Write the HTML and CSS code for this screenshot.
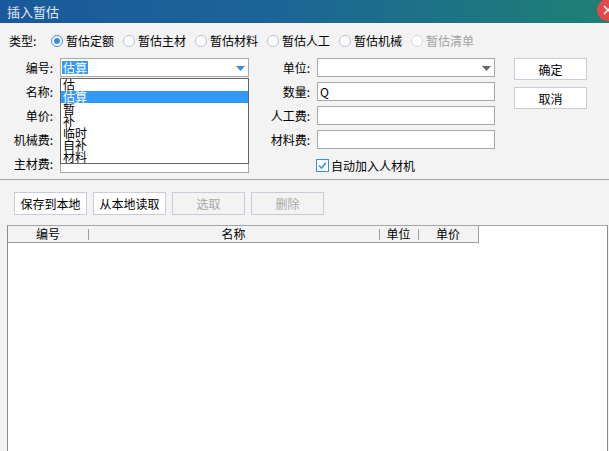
FILE: index.html
```html
<!DOCTYPE html>
<html>
<head>
<meta charset="utf-8">
<title>插入暂估</title>
<link rel="stylesheet" href="styles.css">
</head>
<body>
<div class="window">
  <div class="titlebar">
    <span class="title">插入暂估</span>
    <span class="close">
      <svg width="22" height="22" viewBox="0 0 22 22"><circle cx="11" cy="11" r="11" fill="#e34a4c"/><path d="M7 7 L15 15 M15 7 L7 15" stroke="#fff" stroke-width="1.4"/></svg>
    </span>
  </div>

  <div class="types">
    <span class="types-label">类型:</span>
    <span class="radio checked"><span class="radio-circle"></span>暂估定额</span>
    <span class="radio"><span class="radio-circle"></span>暂估主材</span>
    <span class="radio"><span class="radio-circle"></span>暂估材料</span>
    <span class="radio"><span class="radio-circle"></span>暂估人工</span>
    <span class="radio"><span class="radio-circle"></span>暂估机械</span>
    <span class="radio disabled"><span class="radio-circle"></span>暂估清单</span>
  </div>

  <div class="form">
    <span class="lbl c1">编号:</span>
    <div class="field combo combo-code c2">
      <span class="sel">估算</span>
      <svg class="arrow" width="9" height="5" viewBox="0 0 9 5"><polygon points="0,0 9,0 4.5,5" fill="#3b8de0"/></svg>
      <ul class="droplist">
        <li>估</li>
        <li class="active">估算</li>
        <li>暂</li>
        <li>补</li>
        <li>临时</li>
        <li>自补</li>
        <li>材料</li>
      </ul>
    </div>
    <span class="lbl c3">单位:</span>
    <div class="field combo c4">
      <svg class="arrow" width="9" height="5" viewBox="0 0 9 5"><polygon points="0,0 9,0 4.5,5" fill="#666"/></svg>
    </div>
    <div class="actions">
      <span class="btn">确定</span>
      <span class="btn">取消</span>
    </div>

    <span class="lbl c1">名称:</span>
    <div class="field c2"></div>
    <span class="lbl c3">数量:</span>
    <div class="field c4">Q</div>

    <span class="lbl c1">单价:</span>
    <div class="field c2"></div>
    <span class="lbl c3">人工费:</span>
    <div class="field c4"></div>

    <span class="lbl c1">机械费:</span>
    <div class="field c2"></div>
    <span class="lbl c3">材料费:</span>
    <div class="field c4"></div>

    <span class="lbl c1">主材费:</span>
    <div class="field c2"></div>
    <label class="check c4">
      <svg class="checkbox" width="13" height="13" viewBox="0 0 13 13"><rect x="0.5" y="0.5" width="12" height="12" fill="#fff" stroke="#3b8de0"/><path d="M3 6.5 L5.5 9 L10 3.8" fill="none" stroke="#3b8de0" stroke-width="1.6"/></svg>
      <span>自动加入人材机</span>
    </label>
  </div>

  <div class="sep"></div>

  <div class="toolbar">
    <span class="btn">保存到本地</span>
    <span class="btn">从本地读取</span>
    <span class="btn disabled">选取</span>
    <span class="btn disabled">删除</span>
  </div>

  <div class="table">
    <div class="thead">
      <span class="th col-code">编号</span>
      <span class="th col-name">名称</span>
      <span class="th col-unit">单位</span>
      <span class="th col-price">单价</span>
    </div>
  </div>
</div>
</body>
</html>
```

FILE: styles.css
```css
* { box-sizing: border-box; }
html, body { margin: 0; padding: 0; }
body {
  width: 609px;
  height: 451px;
  overflow: hidden;
  background: #f3f3f3;
  font-family: "Noto Sans CJK SC", "Noto Sans", sans-serif;
  font-size: 12px;
  color: #000;
}
.window {
  display: flex;
  flex-direction: column;
  height: 451px;
}

/* title bar */
.titlebar {
  flex: none;
  height: 23px;
  position: relative;
  padding-left: 7px;
  background: linear-gradient(to right, #1a599c 0%, #1b6597 45%, #1f8074 100%);
  color: #e4ecf5;
  font-size: 13px;
  line-height: 23px;
}
.close {
  position: absolute;
  right: -10px;
  top: -1px;
  width: 22px;
  height: 22px;
}
.close svg { display: block; }

/* radio row */
.types {
  display: flex;
  align-items: center;
  height: 16px;
  margin-top: 10px;
  padding-left: 9px;
  line-height: 16px;
}
.types-label { width: 32px; margin-right: 10px; }
.radio {
  display: flex;
  align-items: center;
  margin-right: 9px;
  white-space: nowrap;
}
.radio-circle {
  width: 12px;
  height: 12px;
  margin-right: 3px;
  border-radius: 50%;
  border: 1px solid #bcc3cf;
  background: #fff;
  display: flex;
  align-items: center;
  justify-content: center;
}
.radio.checked .radio-circle { border-color: #3b8de0; }
.radio.checked .radio-circle::after {
  content: "";
  width: 6px;
  height: 6px;
  border-radius: 50%;
  background: #3b8de0;
}
.radio.disabled { color: #a2a2a2; }
.radio.disabled .radio-circle { border-color: #d6dae0; }

/* form grid */
.form {
  display: grid;
  grid-template-columns: 56px 189px 60px 178px 92px;
  grid-auto-rows: 19px;
  column-gap: 4px;
  row-gap: 5px;
  margin-top: 9px;
  flex: none;
}
.c1 { grid-column: 1; }
.c2 { grid-column: 2; }
.c3 { grid-column: 3; }
.c4 { grid-column: 4; }
.lbl {
  text-align: right;
  padding-right: 3px;
  line-height: 19px;
  white-space: nowrap;
}
.field {
  position: relative;
  height: 19px;
  background: #fff;
  border: 1px solid #a9a99f;
  padding-left: 2px;
  line-height: 17px;
}
.combo .arrow {
  position: absolute;
  right: 3px;
  top: 7px;
}
.combo-code { z-index: 5; padding-left: 1px; }
.sel {
  display: inline-block;
  margin-top: 2px;
  padding: 0 1px;
  background: #3399ff;
  color: #fff;
  line-height: 13px;
  vertical-align: top;
}
.droplist {
  position: absolute;
  z-index: 10;
  left: -1px;
  top: 19px;
  width: 189px;
  margin: 0;
  padding: 0;
  list-style: none;
  background: #fff;
  border: 1px solid #646464;
}
.droplist li {
  height: 12px;
  line-height: 12px;
  padding-left: 2px;
  overflow: visible;
  white-space: nowrap;
}
.droplist li.active { background: #3399ff; color: #fff; }

.actions {
  grid-column: 5;
  grid-row: 1 / span 3;
  display: flex;
  flex-direction: column;
  align-items: flex-start;
  gap: 7px;
  padding-left: 15px;
}
.btn {
  display: flex;
  align-items: center;
  justify-content: center;
  width: 73px;
  height: 22px;
  background: #fff;
  border: 1px solid #c8ccd6;
  white-space: nowrap;
}
.btn.disabled { background: #f3f3f3; color: #a8a8a8; }

.check {
  display: flex;
  align-items: center;
  gap: 2px;
  margin-left: -1px;
  padding-top: 4px;
  white-space: nowrap;
}
.checkbox { display: block; flex: none; }

/* separator */
.sep {
  flex: none;
  height: 1px;
  margin-top: 6px;
  background: #a3a3a3;
}

/* toolbar */
.toolbar {
  flex: none;
  display: flex;
  gap: 6px;
  padding: 12px 0 0 14px;
}
.toolbar .btn { height: 23px; }

/* table */
.table {
  flex: 1;
  margin: 10px 1px 0 7px;
  background: #fff;
  border: 1px solid #8c8c84;
  border-top-color: #a6a6a6;
  border-bottom: none;
}
.thead { display: flex; height: 17px; }
.th {
  position: relative;
  height: 17px;
  background: #f3f3f3;
  border-bottom: 1px solid #9c9c9c;
  text-align: center;
  line-height: 16px;
}
.th + .th::before {
  content: "";
  position: absolute;
  left: 0;
  top: 3px;
  width: 1px;
  height: 11px;
  background: #a0a0a0;
}
.col-code { width: 80px; }
.col-name { width: 291px; }
.col-unit { width: 39px; }
.col-price { width: 61px; border-right: 1px solid #a0a0a0; }
```
